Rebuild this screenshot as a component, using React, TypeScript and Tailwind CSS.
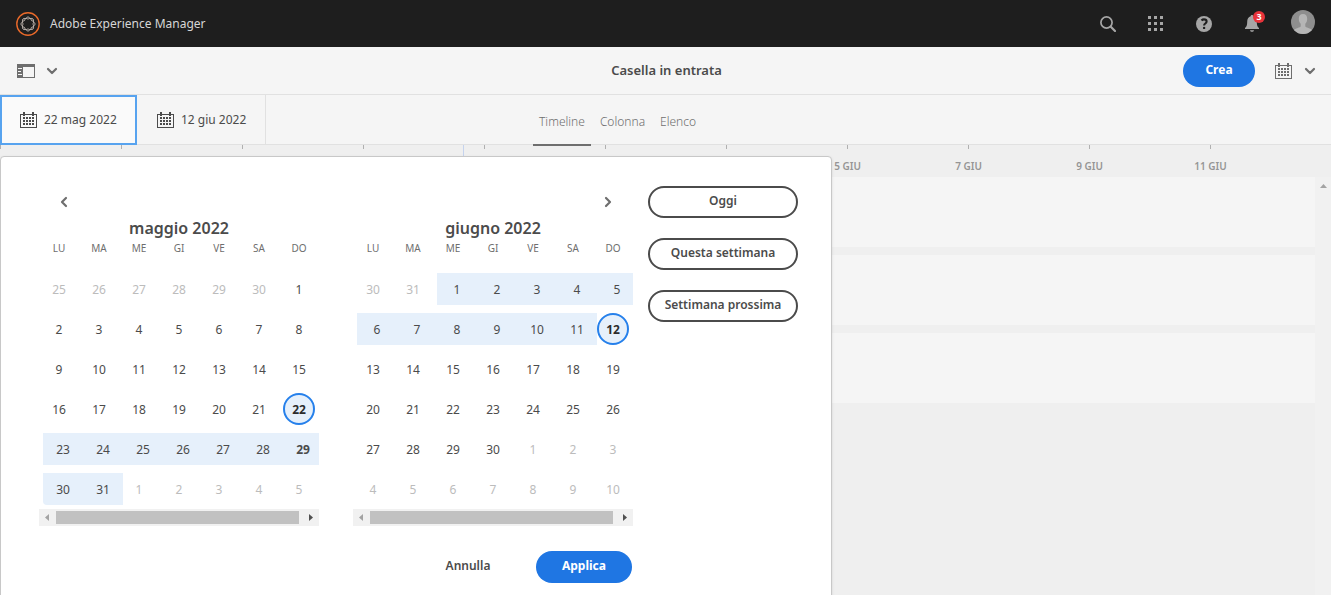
import React from "react";

type Day = { n: number; muted?: boolean; range?: boolean; selected?: boolean; today?: boolean; corner?: boolean };

const WEEKDAYS = ["LU", "MA", "ME", "GI", "VE", "SA", "DO"];

function span(from: number, to: number, extra: Omit<Day, "n"> = {}): Day[] {
  return Array.from({ length: to - from + 1 }, (_, i) => ({ n: from + i, ...extra }));
}

const MAY: Day[] = [
  ...span(25, 30, { muted: true }),
  ...span(1, 21),
  { n: 22, selected: true },
  ...span(23, 28, { range: true }),
  { n: 29, range: true, today: true },
  { n: 30, range: true, corner: true },
  { n: 31, range: true },
  ...span(1, 5, { muted: true }),
];

const JUNE: Day[] = [
  ...span(30, 31, { muted: true }),
  ...span(1, 11, { range: true }),
  { n: 12, selected: true },
  ...span(13, 30),
  ...span(1, 10, { muted: true }),
];

const AXIS = ["", "", "", "", "", "", "", "5 GIU", "7 GIU", "9 GIU", "11 GIU"];

function Chevron({ className, d }: { className: string; d: string }) {
  return (
    <svg className={className} viewBox="0 0 12 12" fill="none" stroke="currentColor" strokeWidth="2.2" strokeLinecap="round" strokeLinejoin="round" aria-hidden="true">
      <path d={d} />
    </svg>
  );
}

const DOWN = "M2 4l4 4 4-4";
const LEFT = "M8 2L4 6l4 4";
const RIGHT = "M4 2l4 4-4 4";

function CalendarIcon({ className }: { className: string }) {
  return (
    <svg className={className} viewBox="0 0 17 16" fill="currentColor" shapeRendering="crispEdges" aria-hidden="true">
      <path d="M3 0h2v2h7V0h2v2h3v14H0V2h3zM1 3v12h15V3h-2v1h-2V3H5v1H3V3z" fillRule="evenodd" />
      {[5, 8, 11].map((y) => [3, 6, 9, 12].map((x) => <rect key={x + "-" + y} x={x} y={y} width="2" height="2" />))}
    </svg>
  );
}

function LogoIcon() {
  return (
    <svg className="size-6" viewBox="0 0 24 24" fill="none" aria-hidden="true">
      <circle cx="12" cy="12" r="11.2" stroke="#e8692a" strokeWidth="1.4" />
      {[0, 45, 90, 135, 180, 225, 270, 315].map((a) => (
        <g key={a} transform={`rotate(${a} 12 12)`} stroke="#cfc4bd">
          <path d="M9.900 6.200Q12 8 14.100 6.200" strokeWidth=".8" />
          <path d="M9.700 6.600Q12 3.200 14.300 6.600" strokeWidth=".8" />
        </g>
      ))}
    </svg>
  );
}

function AppsIcon() {
  return (
    <svg className="size-4" viewBox="0 0 16 16" fill="#a6a6a6" shapeRendering="crispEdges" aria-hidden="true">
      {[0, 6, 12].map((y) => [0, 6, 12].map((x) => <rect key={x + "-" + y} x={x} y={y} width="3" height="3" />))}
    </svg>
  );
}

function Header() {
  return (
    <header className="flex h-[47px] items-center bg-[#1e1e1e] pr-4 pl-4">
      <a href="#" className="flex items-center gap-[10px] text-[12px] text-[#d6d6d6]">
        <LogoIcon />
        Adobe Experience Manager
      </a>
      <div className="ml-auto flex items-center">
        <button aria-label="Cerca" className="flex w-12 justify-center">
          <svg className="size-4" viewBox="0 0 16 16" fill="none" stroke="#a6a6a6" aria-hidden="true">
            <circle cx="6.5" cy="6.5" r="5.6" strokeWidth="1.7" />
            <path d="M10.8 10.8L15 15" strokeWidth="2.2" strokeLinecap="round" />
          </svg>
        </button>
        <button aria-label="Soluzioni" className="flex w-12 justify-center">
          <AppsIcon />
        </button>
        <button aria-label="Aiuto" className="flex w-12 justify-center">
          <svg className="size-4" viewBox="0 0 16 16" aria-hidden="true">
            <circle cx="8" cy="8" r="8" fill="#a6a6a6" />
            <path d="M5.5 4.500C6.200 3.700 7.100 3.400 8 3.400c1.600 0 2.600.900 2.600 2.200 0 1.900-2.500 1.900-2.500 3.800" fill="none" stroke="#1e1e1e" strokeWidth="2.100" />
            <rect x="6.900" y="10.700" width="2.400" height="2.400" rx="1.200" fill="#1e1e1e" />
          </svg>
        </button>
        <button aria-label="Notifiche" className="relative flex w-12 justify-center">
          <svg className="h-[17px] w-4" viewBox="0 0 16 17" fill="#a6a6a6" aria-hidden="true">
            <path d="M8 0c.8 0 1.300.5 1.300 1.200C11.700 1.800 12.800 4 12.800 6.500c0 4 .7 5.200 2.200 6.500v1H1v-1c1.500-1.300 2.200-2.500 2.200-6.500 0-2.500 1.100-4.700 3.500-5.300C6.700.5 7.200 0 8 0zM6 15.200h4c-.2 1-1 1.600-2 1.600s-1.800-.6-2-1.600z" />
          </svg>
          <span className="absolute -top-1 left-[25px] flex size-3 items-center justify-center rounded-full bg-[#e8333a] text-[9px] font-bold text-white">
            3
          </span>
        </button>
        <button aria-label="Profilo" className="mb-[3px] ml-[15px]">
          <svg className="size-6" viewBox="0 0 24 24" aria-hidden="true">
            <defs>
              <clipPath id="avatar">
                <circle cx="12" cy="12" r="12" />
              </clipPath>
            </defs>
            <g clipPath="url(#avatar)">
              <rect width="24" height="24" fill="#8e8e8e" />
              <path d="M12 4c2.800 0 4.200 1.900 4.200 4.800 0 2.100-.7 3.900-1.900 5v2.500c0 1.300 5.700 1.900 7.200 4.200V24H2.500v-3.500c1.500-2.300 7.200-2.900 7.200-4.200v-2.500c-1.200-1.100-1.900-2.900-1.900-5C7.800 5.900 9.200 4 12 4z" fill="#b5b5b5" />
            </g>
          </svg>
        </button>
      </div>
    </header>
  );
}

function Toolbar() {
  return (
    <div className="grid h-12 grid-cols-[1fr_auto_1fr] items-center border-b border-[#e1e1e1] bg-[#f5f5f5] pr-[15px] pl-[17px] text-[#6e6e6e]">
      <button aria-label="Pannello laterale" className="flex items-center gap-[11px] justify-self-start">
        <svg className="h-[14px] w-[18px]" viewBox="0 0 18 14" fill="currentColor" shapeRendering="crispEdges" aria-hidden="true">
          <path d="M0 0h18v14H0zM6 3v10h11V3zM1 4v1h4V4zM1 7v1h3V7zM1 10v1h4v-1z" fillRule="evenodd" />
        </svg>
        <Chevron className="size-3" d={DOWN} />
      </button>
      <h1 className="text-[13px] font-semibold text-[#4b4b4b]">Casella in entrata</h1>
      <div className="flex items-center justify-self-end">
        <button className="h-8 w-[72px] rounded-full bg-[#1f76e3] pb-0.5 text-[12px] font-bold text-white">Crea</button>
        <button aria-label="Vista calendario" className="ml-5 flex items-center gap-3">
          <CalendarIcon className="h-4 w-[17px]" />
          <Chevron className="size-3" d={DOWN} />
        </button>
      </div>
    </div>
  );
}

function DateBar() {
  return (
    <div className="flex h-[50px] border-b border-[#e1e1e1] bg-[#f5f5f5] text-[12px] text-[#4b4b4b]">
      <button className="-mb-px flex w-[137px] items-center gap-[7px] border-2 border-[#57a3ef] bg-[#fafafa] pl-[18px]">
        <CalendarIcon className="h-4 w-[17px]" />
        22 mag 2022
      </button>
      <button className="-mb-px flex w-32 items-center gap-[7px] pl-5">
        <CalendarIcon className="h-4 w-[17px]" />
        12 giu 2022
      </button>
      <nav className="flex gap-[3px] border-l border-[#e1e1e1] pl-[267px] font-light text-[#6e6e6e]">
        <a href="#timeline" className="relative z-10 -mb-0.5 flex items-center border-b-2 border-[#6e6e6e] px-[6px] pt-1">Timeline</a>
        <a href="#colonna" className="flex items-center px-[6px] pt-1">Colonna</a>
        <a href="#elenco" className="flex items-center px-[6px] pt-1">Elenco</a>
      </nav>
    </div>
  );
}

function Timeline() {
  return (
    <div className="flex flex-1 flex-col">
      <div className="-ml-[60px] flex h-8 overflow-hidden">
        {AXIS.map((label, i) => (
          <div key={i} className="flex w-[121px] shrink-0 flex-col items-center gap-[7px]">
            <span className="h-1 w-px bg-[#b0b0b0]" />
            <span className="text-[10px] leading-5 font-semibold text-[#959595]">{label}</span>
          </div>
        ))}
      </div>
      <div className="flex flex-1">
        <div className="flex flex-1 flex-col gap-2">
          {[0, 1, 2].map((row) => (
            <div key={row} className="h-[70px] bg-[#f5f5f5]" />
          ))}
        </div>
        <div className="flex w-4 justify-center bg-[#f1f1f1] pt-[7px]">
          <svg className="h-[5px] w-[7px]" viewBox="0 0 7 5" fill="#a3a3a3" aria-hidden="true">
            <path d="M0 4h7L3.500 0z" />
          </svg>
        </div>
      </div>
    </div>
  );
}

function dayClass(d: Day) {
  if (d.selected) return "mx-auto block size-8 rounded-full border-2 border-[#2680eb] bg-[#e6f0fb] pt-0.5 font-bold text-[#2c2c2c]";
  if (d.range) return "relative left-1 block h-8 w-10 bg-[#e6f0fb] pt-0.5 text-[#4b4b4b]" + (d.today ? " font-bold" : "") + (d.corner ? " rounded-bl" : "");
  return "block h-8 w-10 pt-0.5 " + (d.muted ? "text-[#bcbcbc]" : "text-[#4b4b4b]");
}

function ScrollTrack() {
  return (
    <div className="flex h-[17px] items-center justify-between bg-[#f1f1f1] px-[6px]">
      <svg className="h-[7px] w-1" viewBox="0 0 4 7" fill="#a3a3a3" aria-hidden="true">
        <path d="M4 0v7L0 3.500z" />
      </svg>
      <span className="ml-[7px] h-[13px] flex-1 bg-[#c1c1c1]" />
      <svg className="ml-[10px] h-[7px] w-1" viewBox="0 0 4 7" fill="#505050" aria-hidden="true">
        <path d="M0 0v7l4-3.500z" />
      </svg>
    </div>
  );
}

function Month({ title, days, side }: { title: string; days: Day[]; side: "prev" | "next" }) {
  const weeks = Array.from({ length: 6 }, (_, i) => days.slice(i * 7, i * 7 + 7));
  return (
    <section className="w-[280px] overflow-hidden">
      <div className={"flex h-8 items-center px-[19px] text-[#6e6e6e] " + (side === "next" ? "justify-end" : "")}>
        {side === "prev" ? (
          <button aria-label="Mese precedente"><Chevron className="size-3" d={LEFT} /></button>
        ) : (
          <button aria-label="Mese successivo"><Chevron className="size-3" d={RIGHT} /></button>
        )}
      </div>
      <table className="w-full table-fixed border-collapse text-center">
        <caption className="h-5 text-base leading-5 font-semibold text-[#4b4b4b]">{title}</caption>
        <thead>
          <tr className="h-[31px] align-top">
            {WEEKDAYS.map((w) => (
              <th key={w} scope="col" className="p-0 text-[10px] leading-5 font-normal text-[#6e6e6e]">{w}</th>
            ))}
          </tr>
        </thead>
        <tbody>
          {weeks.map((week, i) => (
            <tr key={i} className="h-10">
              {week.map((d, j) => (
                <td key={j} className="p-0 text-[12px]">
                  <button className={dayClass(d)}>{d.n}</button>
                </td>
              ))}
            </tr>
          ))}
        </tbody>
      </table>
      <ScrollTrack />
    </section>
  );
}

function RangePicker() {
  return (
    <div role="dialog" aria-label="Intervallo date" className="absolute top-[156px] left-0 flex w-[832px] gap-[15px] rounded border border-[#c8c8c8] bg-white pt-[29px] pb-8 pl-[38px] text-[12px] shadow-sm">
      <div>
        <div className="flex gap-[34px]">
          <Month title="maggio 2022" days={MAY} side="prev" />
          <Month title="giugno 2022" days={JUNE} side="next" />
        </div>
        <div className="mt-[25px] flex justify-end gap-5 pr-px">
          <button className="h-8 w-24 pb-0.5 font-semibold text-[#4b4b4b]">Annulla</button>
          <button className="h-8 w-24 rounded-full bg-[#1f76e3] pb-0.5 font-bold text-white">Applica</button>
        </div>
      </div>
      <div className="flex w-[150px] flex-col gap-5 font-semibold text-[#4b4b4b]">
        {["Oggi", "Questa settimana", "Settimana prossima"].map((t) => (
          <button key={t} className="h-8 rounded-full border-2 border-[#4b4b4b] pb-0.5 whitespace-nowrap">{t}</button>
        ))}
      </div>
    </div>
  );
}

export default function App() {
  return (
    <div className="relative flex h-screen flex-col overflow-hidden bg-[#efefef] font-['Noto_Sans',sans-serif]">
      <Header />
      <Toolbar />
      <DateBar />
      <Timeline />
      <span className="absolute top-[145px] left-[463px] h-[11px] w-px bg-[#c5d3ee]" />
      <RangePicker />
    </div>
  );
}
